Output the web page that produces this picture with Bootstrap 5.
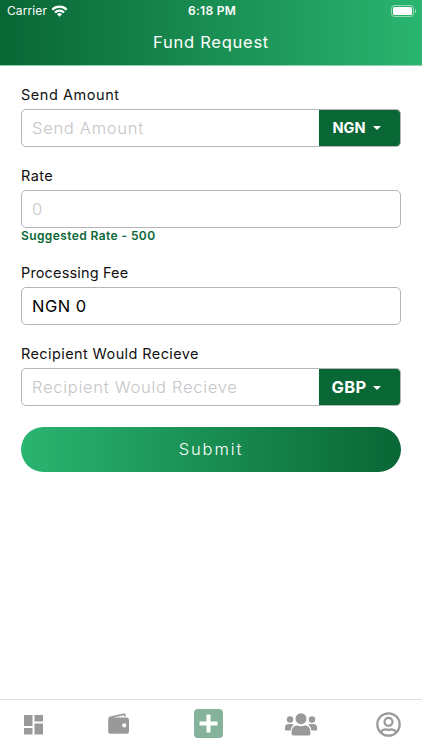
<!DOCTYPE html>
<html lang="en">
  <head>
    <meta charset="UTF-8" />
    <meta name="viewport" content="width=device-width, initial-scale=1" />
    <title>Fund Request</title>
    <link
      href="https://cdn.jsdelivr.net/npm/bootstrap@5.3.2/dist/css/bootstrap.min.css"
      rel="stylesheet"
    />
    <style>
      :root {
        --brand-dark: #096635;
        --brand-light: #2ab570;
      }
      body {
        font-family: Inter, "Open Sans", sans-serif;
        color: #111;
      }
      .app-header {
        height: 66px;
        background: linear-gradient(90deg, var(--brand-dark), var(--brand-light));
        border-bottom: 1px solid #8fd0ae;
      }
      .status-bar {
        height: 22px;
        font-size: 12px;
        padding: 0 5px 0 7px;
      }
      .status-bar > * {
        flex: 1 1 0;
      }
      .carrier {
        letter-spacing: 0.1px;
      }
      .clock {
        letter-spacing: 0.3px;
      }
      .page-title {
        font-size: 16.5px;
        line-height: 20px;
        letter-spacing: 0.75px;
        margin-top: 10px;
      }
      .request-form {
        padding: 19px 21px 0;
      }
      .field {
        margin-bottom: 19px;
      }
      .field .form-label {
        display: block;
        font-size: 14.5px;
        line-height: 20px;
        letter-spacing: 0.4px;
        margin-bottom: 4px;
      }
      .field .label-wide {
        letter-spacing: 0.55px;
      }
      .field .label-tight {
        letter-spacing: 0.15px;
      }
      .field .form-control {
        height: 38px;
        padding: 0 10px;
        font-size: 16.5px;
        letter-spacing: 0.5px;
        color: #000;
        border-color: #b5b5b5;
        border-radius: 5px;
      }
      .field .form-control::placeholder {
        color: #c5c5c7;
        font-weight: 300;
        letter-spacing: 0.72px;
      }
      .currency-btn {
        width: 82px;
        padding: 0 6px 0 0;
        color: #fff;
        background: var(--brand-dark);
        border: 1px solid #b5b5b5;
        border-left: 0;
        border-radius: 5px;
        font-size: 14.5px;
        font-weight: 700;
      }
      .currency-btn.currency-lg {
        font-size: 16.5px;
        letter-spacing: 0.3px;
        padding-right: 6px;
      }
      .currency-btn::after {
        margin-left: 7px;
        border-width: 4.5px 4.5px 0;
        vertical-align: 3px;
      }
      .rate-hint {
        font-size: 12px;
        font-weight: 600;
        line-height: 16px;
        letter-spacing: 0.4px;
        color: var(--brand-dark);
      }
      .submit-btn {
        height: 45px;
        margin-top: 2px;
        border: 0;
        color: #fff;
        font-size: 16.5px;
        font-weight: 300;
        letter-spacing: 1.9px;
        background: linear-gradient(90deg, var(--brand-light), var(--brand-dark));
      }
      .tab-bar {
        height: 51px;
        padding: 0 21px 1px 24px;
        border-top: 1px solid #dedede;
        color: #999;
      }
      .tab-bar .nav-link {
        padding: 0;
        color: inherit;
      }
      .tab-bar .tab-wallet {
        margin-left: 6px;
        margin-bottom: 1px;
      }
      .tab-bar .tab-add {
        margin-left: 5px;
        margin-bottom: 3px;
      }
      .tab-bar .tab-people {
        margin-left: 3px;
      }
      .tab-bar svg {
        display: block;
      }
    </style>
  </head>
  <body>
    <div class="d-flex flex-column vh-100 bg-white overflow-hidden">
      <!-- Header -->
      <header class="app-header text-white">
        <div class="status-bar d-flex align-items-center">
          <div class="d-flex align-items-center">
            <span class="carrier">Carrier</span>
            <svg class="ms-1" width="17" height="12" viewBox="0 0 17 12" fill="none" stroke="#fff" stroke-width="2.2">
              <path d="M1.3 4.7a10.2 10.2 0 0 1 14.4 0" />
              <path d="M4 7.5a6.4 6.4 0 0 1 9 0" />
              <path d="M8.5 11.8 6 9.3a3.5 3.5 0 0 1 5 0z" fill="#fff" stroke="none" />
            </svg>
          </div>
          <div class="clock text-center fw-semibold">6:18 PM</div>
          <div class="d-flex justify-content-end">
            <svg width="26" height="12" viewBox="0 0 26 12">
              <rect x=".5" y=".5" width="22" height="11" rx="3" fill="none" stroke="#fff" stroke-opacity=".5" />
              <rect x="2" y="2" width="19" height="8" rx="1.6" fill="#fff" />
              <path d="M24 4v4c1.600-.6 1.600-3.400 0-4z" fill="#fff" fill-opacity=".6" />
            </svg>
          </div>
        </div>
        <h1 class="page-title text-center fw-normal mb-0">Fund Request</h1>
      </header>

      <!-- Request Form -->
      <form class="request-form flex-grow-1">
        <div class="field">
          <label for="amount" class="form-label label-wide">Send Amount</label>
          <div class="input-group">
            <input type="text" class="form-control" id="amount" placeholder="Send Amount" />
            <button type="button" class="btn currency-btn dropdown-toggle">NGN</button>
          </div>
        </div>
        <div class="field">
          <label for="rate" class="form-label">Rate</label>
          <input type="text" class="form-control" id="rate" placeholder="0" />
          <div class="rate-hint">Suggested Rate - 500</div>
        </div>
        <div class="field">
          <label for="fee" class="form-label label-tight">Processing Fee</label>
          <input type="text" class="form-control" id="fee" value="NGN 0" />
        </div>
        <div class="field">
          <label for="receive" class="form-label">Recipient Would Recieve</label>
          <div class="input-group">
            <input type="text" class="form-control" id="receive" placeholder="Recipient Would Recieve" />
            <button type="button" class="btn currency-btn currency-lg dropdown-toggle">GBP</button>
          </div>
        </div>
        <button type="button" class="btn submit-btn w-100 rounded-pill">Submit</button>
      </form>

      <!-- Bottom Tabs -->
      <nav class="tab-bar nav d-flex flex-nowrap justify-content-between align-items-center">
        <a class="nav-link" href="#" aria-label="Dashboard">
          <svg width="19" height="20" viewBox="0 0 19 20" fill="currentColor">
            <path d="M0 0h8.500v11H0zM10.500 0H19v6.500h-8.500zM10.500 8.500H19v11h-8.500zM0 13h8.500v6.500H0z" />
          </svg>
        </a>
        <a class="nav-link tab-wallet" href="#" aria-label="Wallet">
          <svg width="22" height="22" viewBox="0 0 22 22" fill="currentColor">
            <path d="M2 3.500 15.500.6q1.900-.4 2.200 1.200l.3 1.800h-1.700L16 2.200 5.500 4.600h13q2.500 0 2.500 2.400v11.300q0 2.500-2.500 2.500H2.700Q.2 20.800.2 18.300V6.200Q.2 4 2 3.500zM16.200 10.300a2.100 2.100 0 1 0 0 4.200 2.100 2.100 0 0 0 0-4.200z" />
          </svg>
        </a>
        <a class="nav-link tab-add" href="#" aria-label="New request">
          <svg width="29" height="29" viewBox="0 0 29 29">
            <rect width="29" height="29" rx="4" fill="#84b29a" />
            <path d="M14.500 5.500v18M5.500 14.500h18" stroke="#fff" stroke-width="4" />
          </svg>
        </a>
        <a class="nav-link tab-people" href="#" aria-label="Recipients">
          <svg width="32" height="23" viewBox="0 0 32 23" fill="currentColor">
            <circle cx="16" cy="5.700" r="5.500" />
            <circle cx="5" cy="6.500" r="3.200" />
            <circle cx="27" cy="6.500" r="3.200" />
            <path d="M6.500 20.500c0-5 1.800-8 5.200-8 1.500 0 2.300.8 4.300.8s2.800-.8 4.300-.8c3.400 0 5.200 3 5.200 8q0 2-2 2h-15q-2 0-2-2z" />
            <path d="M0 17v-2.500Q0 11 3.500 11h3q1.300 0 2.200.8Q6.200 13.300 5.500 17.500H1Q0 17.500 0 17zM32 17v-2.500Q32 11 28.500 11h-3q-1.300 0-2.200.8 2.500 1.500 3.200 5.700H31q1 0 1-.5z" />
          </svg>
        </a>
        <a class="nav-link" href="#" aria-label="Profile">
          <svg width="25" height="25" viewBox="0 0 25 25" fill="none" stroke="currentColor" stroke-width="2.200">
            <circle cx="12.500" cy="12.500" r="11.200" />
            <circle cx="12.500" cy="9.800" r="4" />
            <path d="M4.800 19.800c1.400-2 3-2.500 4.700-2.500 1.300 0 1.700.6 3 .6s1.700-.6 3-.6c1.700 0 3.300.5 4.700 2.500" />
          </svg>
        </a>
      </nav>
    </div>

    <script src="https://cdn.jsdelivr.net/npm/bootstrap@5.3.2/dist/js/bootstrap.bundle.min.js"></script>
  </body>
</html>
